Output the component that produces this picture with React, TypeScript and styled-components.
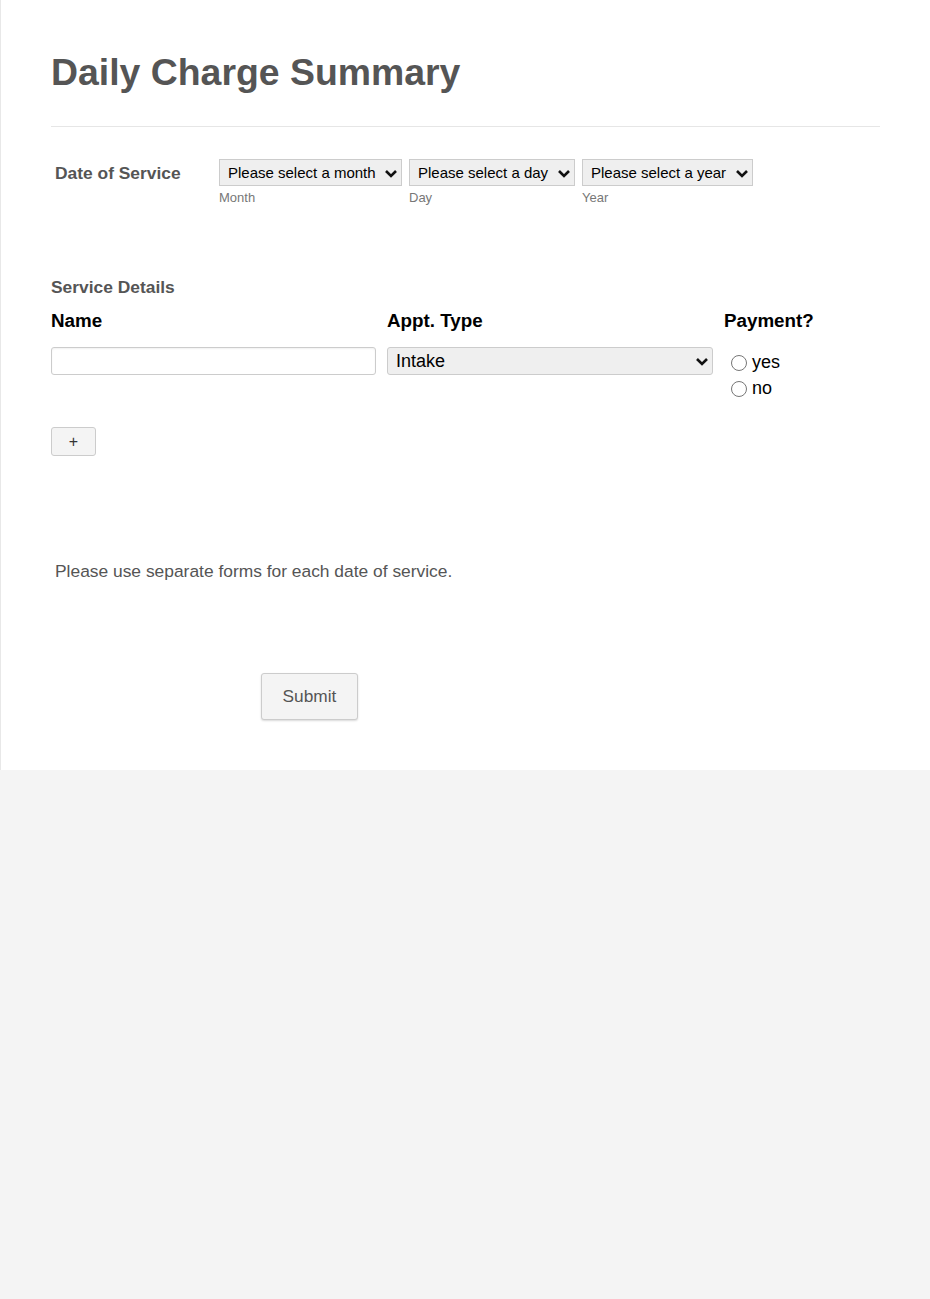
import React, { useState } from "react";
import styled, { createGlobalStyle } from "styled-components";

const GlobalStyle = createGlobalStyle`
  html, body {
    margin: 0;
    padding: 0;
    background: #f4f4f4;
    font-family: "Liberation Sans", Arial, sans-serif;
  }
`;

const Page = styled.div`
  min-height: 1299px;
  background: #f4f4f4;
`;

const FormPanel = styled.form`
  background: #fff;
  border-left: 1px solid #e8e8e8;
  height: 770px;
  box-sizing: border-box;
  padding: 50px 50px 0 49px;
`;

const Title = styled.h1`
  margin: 0 0 0 1px;
  font-size: 37.4px;
  font-weight: bold;
  color: #555;
  line-height: 44px;
`;

const Divider = styled.hr`
  border: none;
  border-top: 1px solid #e6e6e6;
  margin: 32px 0 0 1px;
`;

const DateRow = styled.div`
  display: flex;
  align-items: flex-start;
  margin-top: 32px;
  padding-left: 5px;
`;

const FieldLabel = styled.label`
  width: 164px;
  font-size: 17.4px;
  font-weight: bold;
  color: #555;
  padding-top: 4px;
`;

const DateParts = styled.div`
  display: flex;
  gap: 7px;
`;

const DatePart = styled.div`
  display: flex;
  flex-direction: column;
`;

const SelectWrap = styled.div`
  position: relative;
  display: flex;
`;

const Chevron = styled.svg<{ $right: number }>`
  position: absolute;
  right: ${(p) => p.$right}px;
  top: 50%;
  margin-top: -4px;
  width: 14px;
  height: 9px;
  pointer-events: none;
`;

const DateSelect = styled.select<{ $w: number }>`
  appearance: none;
  width: ${(p) => p.$w}px;
  height: 27px;
  font-family: "Liberation Sans", Arial, sans-serif;
  font-size: 15px;
  color: #000;
  background: #efefef;
  border: 1px solid #ccc;
  border-radius: 0;
  padding: 0 24px 0 8px;
`;

const SubLabel = styled.span`
  font-size: 13px;
  color: #777;
  margin-top: 4px;
`;

const SectionTitle = styled.div`
  margin-top: 72px;
  margin-left: 1px;
  font-size: 17.4px;
  font-weight: bold;
  color: #555;
`;

const Grid = styled.div`
  display: grid;
  grid-template-columns: 325px 326px 1fr;
  column-gap: 11px;
  margin-top: 12px;
  margin-left: 1px;
`;

const ColHead = styled.div`
  font-size: 18.8px;
  font-weight: bold;
  color: #000;
  height: 26px;
`;

const Cell = styled.div`
  margin-top: 11px;
`;

const TextInput = styled.input`
  width: 100%;
  box-sizing: border-box;
  height: 28px;
  border: 1px solid #ccc;
  border-radius: 3px;
  box-shadow: inset 0 1px 2px rgba(0, 0, 0, 0.06);
  font-size: 16px;
`;

const TypeSelect = styled.select`
  appearance: none;
  width: 100%;
  height: 28px;
  font-family: "Liberation Sans", Arial, sans-serif;
  font-size: 18px;
  color: #000;
  background: #efefef;
  border: 1px solid #ccc;
  border-radius: 3px;
  padding: 0 28px 0 8px;
`;

const RadioList = styled.div`
  display: flex;
  flex-direction: column;
  gap: 4px;
  padding-top: 4px;
  padding-left: 7px;
`;

const RadioLabel = styled.label`
  display: flex;
  align-items: center;
  font-size: 18px;
  color: #000;
  line-height: 22px;
`;

const Radio = styled.input`
  width: 16px;
  height: 16px;
  margin: 2px 5px 0 0;
`;

const AddButton = styled.button`
  margin-top: 28px;
  margin-left: 1px;
  width: 45px;
  height: 29px;
  background: #f4f4f4;
  border: 1px solid #ccc;
  border-radius: 3px;
  font-size: 16px;
  color: #333;
  font-family: "Liberation Sans", Arial, sans-serif;
`;

const Note = styled.p`
  margin: 105px 0 0 5px;
  font-size: 17.4px;
  color: #555;
`;

const SubmitRow = styled.div`
  padding-left: 211px;
  margin-top: 91px;
`;

const SubmitButton = styled.button`
  width: 97px;
  height: 47px;
  background: #f4f4f4;
  border: 1px solid #ccc;
  border-radius: 3px;
  box-shadow: 0 1px 2px rgba(0, 0, 0, 0.15);
  font-family: "Liberation Sans", Arial, sans-serif;
  font-size: 17.3px;
  color: #555;
`;

const ChevronIcon = ({ right }: { right: number }) => (
  <Chevron $right={right} viewBox="0 0 14 9">
    <path d="M2 2 L7 7 L12 2" fill="none" stroke="#111" strokeWidth="2.6" />
  </Chevron>
);

const dateFields = [
  { label: "Month", placeholder: "Please select a month", w: 183 },
  { label: "Day", placeholder: "Please select a day", w: 166 },
  { label: "Year", placeholder: "Please select a year", w: 171 },
];

export default function App() {
  const [rows, setRows] = useState([0]);

  return (
    <Page>
      <GlobalStyle />
      <FormPanel onSubmit={(e) => e.preventDefault()}>
        <Title>Daily Charge Summary</Title>
        <Divider />

        <DateRow>
          <FieldLabel>Date of Service</FieldLabel>
          <DateParts>
            {dateFields.map((f) => (
              <DatePart key={f.label}>
                <SelectWrap>
                  <DateSelect $w={f.w}>
                    <option>{f.placeholder}</option>
                  </DateSelect>
                  <ChevronIcon right={4} />
                </SelectWrap>
                <SubLabel>{f.label}</SubLabel>
              </DatePart>
            ))}
          </DateParts>
        </DateRow>

        <SectionTitle>Service Details</SectionTitle>
        <Grid>
          <ColHead>Name</ColHead>
          <ColHead>Appt. Type</ColHead>
          <ColHead>Payment?</ColHead>
          {rows.map((r) => (
            <React.Fragment key={r}>
              <Cell>
                <TextInput type="text" />
              </Cell>
              <Cell>
                <SelectWrap>
                  <TypeSelect defaultValue="Intake">
                    <option>Intake</option>
                    <option>Follow-up</option>
                  </TypeSelect>
                  <ChevronIcon right={4} />
                </SelectWrap>
              </Cell>
              <Cell>
                <RadioList>
                  <RadioLabel>
                    <Radio type="radio" name={`pay-${r}`} />
                    yes
                  </RadioLabel>
                  <RadioLabel>
                    <Radio type="radio" name={`pay-${r}`} />
                    no
                  </RadioLabel>
                </RadioList>
              </Cell>
            </React.Fragment>
          ))}
        </Grid>
        <AddButton type="button" onClick={() => setRows([...rows, rows.length])}>
          +
        </AddButton>

        <Note>Please use separate forms for each date of service.</Note>

        <SubmitRow>
          <SubmitButton type="submit">Submit</SubmitButton>
        </SubmitRow>
      </FormPanel>
    </Page>
  );
}
